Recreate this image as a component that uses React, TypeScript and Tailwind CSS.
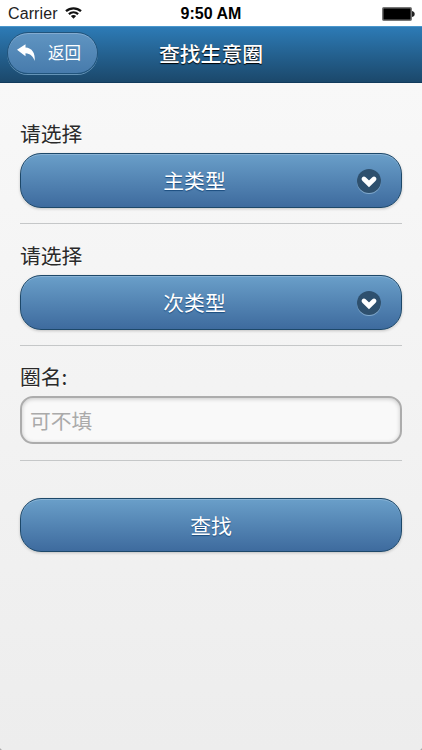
import { useState } from 'react';
import clsx from 'clsx';

const BUTTON =
  'flex w-full items-center border border-[#1d4869] bg-linear-to-b from-[#6a9fc9] to-[#3e6b9e] text-white [text-shadow:0_1px_1px_#194b7e]';

function StatusBar() {
  return (
    <header className="grid h-[26px] grid-cols-3 items-center bg-white pt-px font-['Liberation_Sans',sans-serif] text-black">
      <div className="flex items-center gap-[7px] pl-2 text-[16px] tracking-[0.1px] text-[#222]">
        Carrier
        <svg width="17" height="12" viewBox="0 0 17 12" fill="none" stroke="#111" strokeWidth="2.3" className="-mt-px">
          <path d="M1 4.2C5.3.3 11.7.3 16 4.2" />
          <path d="M3.9 7.2c2.7-2.4 6.5-2.4 9.2 0" />
          <path d="M5.9 8.9 8.5 11.7l2.6-2.8c-1.5-1.3-3.7-1.3-5.2 0z" fill="#111" stroke="none" />
        </svg>
      </div>
      <div className="text-center text-[16px] font-bold">9:50 AM</div>
      <div className="flex justify-end pr-[7px]">
        <svg width="33" height="14" viewBox="0 0 33 14">
          <rect x=".75" y=".75" width="28.5" height="12.5" rx="1" fill="#000" stroke="#777" strokeWidth="1.5" />
          <path d="M30 4c2 .5 2.7 1.5 2.7 3S32 9.5 30 10z" fill="#222" />
        </svg>
      </div>
    </header>
  );
}

function NavBar() {
  return (
    <nav className="grid h-[57px] grid-cols-[1fr_auto_1fr] items-center border-t border-b border-t-[#4b97cc] border-b-[#123b5c] bg-linear-to-b from-[#2d7bb6] to-[#1b486b] text-white">
      <button className="mb-1 ml-[7px] flex h-[42px] w-[91px] items-center rounded-full border border-[#21547c] bg-linear-to-b from-[#6095c2] to-[#477bac] pl-[9px] shadow-[0_1px_0_#6594b7,inset_0_1px_0_#83abd0]">
        <svg width="19" height="18" viewBox="0 0 19 18" fill="#fff">
          <path d="M0 5.8 8.5.2v3.2C15 3.7 18.5 9 17.7 17 16 12.3 13.2 9.5 8.5 9.3v2.9z" />
        </svg>
        <span className="ml-[12px] text-[16.5px] leading-none">返回</span>
      </button>
      <h1 className="mb-[3px] text-[20.8px] leading-none font-medium [text-shadow:0_1px_1px_#000]">查找生意圈</h1>
    </nav>
  );
}

function ChevronBadge() {
  return (
    <svg width="26" height="26" viewBox="0 0 26 26" fill="none">
      <circle cx="13" cy="14" r="12" fill="#82aace" />
      <circle cx="13" cy="13" r="12" fill="#2e506e" />
      <path d="m8 11 5 4.8 5-4.8" stroke="#fff" strokeWidth="4.8" strokeLinecap="round" />
    </svg>
  );
}

function Label({ children }: { children: string }) {
  return <div className="h-[26px] text-[20.8px] leading-[26px] text-[#2a2a2a] [text-shadow:0_1px_0_#fff]">{children}</div>;
}

function SelectField({ label, text, className }: { label: string; text: string; className?: string }) {
  return (
    <div className={clsx('border-b border-[#c5c7c8]', className)}>
      <Label>{label}</Label>
      <button
        className={`${BUTTON} mt-[7px] mb-[15px] h-[55px] rounded-[21px] pr-[19px] shadow-[0_1px_3px_#0003,inset_0_1px_0_#8ab3d5]`}
      >
        <span className="flex-1 pl-[12px] text-center text-[20.8px] leading-none">{text}</span>
        <ChevronBadge />
      </button>
    </div>
  );
}

export default function App() {
  const [name, setName] = useState('');

  return (
    <div className="h-[750px] w-[422px] overflow-hidden bg-[#aaa] font-['Noto_Sans_CJK_SC',sans-serif]">
      <div className="flex h-full flex-col overflow-hidden rounded-b-[4px] bg-white">
        <StatusBar />
        <NavBar />
        <main className="flex-1 bg-linear-to-b from-[#f8f8f8] to-[#ededed] px-[20px] pt-[37px]">
          <SelectField label="请选择" text="主类型" />
          <SelectField label="请选择" text="次类型" className="pt-[18px]" />

          {/* Circle name */}
          <div className="border-b border-[#c5c7c8] pt-[17px] pb-4">
            <Label>圈名:</Label>
            <input
              value={name}
              onChange={(e) => setName(e.target.value)}
              placeholder="可不填"
              className="mt-[7px] block h-[48px] w-full rounded-[13px] border-2 border-[#acacac] bg-[#f9f9f9] px-[8px] text-[20.8px] text-[#333] shadow-[inset_0_1px_4px_#0003] outline-none placeholder:text-[#aaa]"
            />
          </div>

          <button
            className={`${BUTTON} mt-[37px] h-[54px] justify-center rounded-[21px] text-[20.8px] leading-none shadow-[0_1px_3px_#0003,inset_0_1px_0_#8ab3d5]`}
          >
            查找
          </button>
        </main>
      </div>
    </div>
  );
}
